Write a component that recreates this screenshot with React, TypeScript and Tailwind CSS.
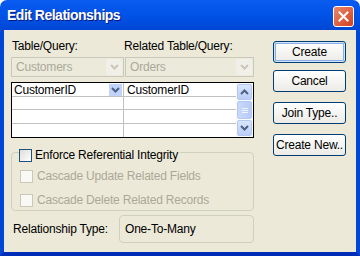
import React from "react";

const font = { fontFamily: "'Liberation Sans', Arial, sans-serif" };

function Chevron({ color = "#4D6185" }: { color?: string }) {
  return (
    <svg width="9" height="6" viewBox="0 0 9 6">
      <path d="M1 1 L4.5 4.5 L8 1" fill="none" stroke={color} strokeWidth="2" />
    </svg>
  );
}

function Combo({ text, className }: { text: string; className: string }) {
  return (
    <div className={`flex h-[20px] items-center border border-[#CAC8BB] bg-[#EBEADB] ${className}`}>
      <span className="flex-1 pl-[4px] text-[#ACA899]">{text}</span>
      <div className="mr-[1px] flex h-[16px] w-[16px] items-center justify-center rounded-[2px] bg-[#F0EFE8]">
        <Chevron color="#C9C7BA" />
      </div>
    </div>
  );
}

function XpButton({ label, primary, className }: { label: string; primary?: boolean; className?: string }) {
  return (
    <div
      className={`flex h-[22px] w-[73px] items-center justify-center rounded-[3px] border border-[#003C74] bg-gradient-to-b from-white to-[#ECEBE6] text-black ${
        primary ? "shadow-[inset_0_0_0_1px_#CEE7FF,inset_0_0_0_2px_#89ADE4]" : ""
      } ${className ?? ""}`}
    >
      {label}
    </div>
  );
}

function Check({ enabled }: { enabled?: boolean }) {
  return (
    <div
      className={`h-[13px] w-[13px] shrink-0 border ${
        enabled ? "border-[#1C5180] bg-gradient-to-br from-[#DCDCD7] to-white" : "border-[#CAC8BB] bg-[#F8F8F4]"
      }`}
    />
  );
}

export default function App() {
  return (
    <div className="h-[256px] w-[360px] overflow-hidden text-[12px] tracking-[-0.2px]" style={font}>
      <div className="relative flex h-[30px] items-center rounded-t-[7px] bg-gradient-to-b from-[#0A5BEF] via-[#0053E6] to-[#0046D5] pl-[7px]">
        <span className="text-[14px] font-bold tracking-[-0.5px] text-white [text-shadow:1px_1px_#0A1883]">Edit Relationships</span>
        <div className="absolute right-[6px] top-[6px] flex h-[21px] w-[21px] items-center justify-center rounded-[3px] border border-white bg-gradient-to-br from-[#E8866A] to-[#D33D18]">
          <svg width="11" height="11" viewBox="0 0 11 11">
            <path d="M1.5 1.5 L9.5 9.5 M9.5 1.5 L1.5 9.5" stroke="white" strokeWidth="2" strokeLinecap="square" />
          </svg>
        </div>
      </div>
      <div className="flex h-[226px] border-x-4 border-b-4 border-x-[#0046D5] border-b-[#002DB8] bg-[#ECE9D8]">
        <div className="ml-[7px] flex w-[243px] flex-col">
          <div className="mt-[8px] flex h-[16px] items-center text-black">
            <span className="w-[113px] pl-[1px]">Table/Query:</span>
            <span>Related Table/Query:</span>
          </div>
          <div className="mt-[3px] flex">
            <Combo text="Customers" className="w-[113px]" />
            <Combo text="Orders" className="ml-[1px] flex-1" />
          </div>
          <div className="mt-[5px] flex h-[56px] border border-black bg-white">
            <div className="flex flex-1 flex-col">
              {[0, 1, 2, 3].map((i) => (
                <div key={i} className={`flex ${i % 2 ? "h-[13px]" : "h-[14px]"} ${i < 3 ? "border-b border-[#C0C0C0]" : ""}`}>
                  <div className="flex w-[112px] items-center border-r border-[#C0C0C0] pl-[2px]">
                    {i === 0 && (
                      <>
                        <span className="flex-1">CustomerID</span>
                        <span className="mr-[1px] flex h-[12px] w-[13px] items-center justify-center bg-[#C1D3FB]">
                          <Chevron color="#4D6185" />
                        </span>
                      </>
                    )}
                  </div>
                  <div className="flex flex-1 items-center pl-[3px]">{i === 0 && "CustomerID"}</div>
                </div>
              ))}
            </div>
            <div className="flex w-[17px] flex-col bg-[#FAFAF7] p-[1px]">
              <div className="flex h-[16px] items-center justify-center rounded-[2px] border border-[#B4C8F6] bg-gradient-to-b from-[#D9E6FF] to-[#B9CDF8]">
                <svg width="9" height="6" viewBox="0 0 9 6">
                  <path d="M1 5 L4.5 1.5 L8 5" fill="none" stroke="#4D6185" strokeWidth="2" />
                </svg>
              </div>
              <div className="my-[1px] flex flex-1 flex-col items-center justify-center gap-[1px] rounded-[2px] border border-[#B4C8F6] bg-gradient-to-r from-[#C9D8FC] to-[#B6CBF8]">
                <div className="h-px w-[6px] bg-[#EEF4FE]" />
                <div className="h-px w-[6px] bg-[#EEF4FE]" />
                <div className="h-px w-[6px] bg-[#EEF4FE]" />
              </div>
              <div className="flex h-[16px] items-center justify-center rounded-[2px] border border-[#B4C8F6] bg-gradient-to-b from-[#D9E6FF] to-[#B9CDF8]">
                <Chevron color="#4D6185" />
              </div>
            </div>
          </div>
          <div className="relative mt-[14px] flex h-[59px] flex-col rounded-[4px] border border-[#D0D0BF]">
            <div className="absolute -top-[7px] left-[7px] flex items-center gap-[3px] bg-[#ECE9D8] pr-[2px] text-black">
              <Check enabled />
              <span>Enforce Referential Integrity</span>
            </div>
            <div className="ml-[8px] mt-[14px] flex items-center gap-[4px] text-[#ACA899]">
              <Check />
              <span>Cascade Update Related Fields</span>
            </div>
            <div className="ml-[8px] mt-[6px] flex items-center gap-[4px] text-[#ACA899]">
              <Check />
              <span>Cascade Delete Related Records</span>
            </div>
          </div>
          <div className="mt-[4px] flex items-center">
            <span className="w-[108px] pl-[2px] text-black">Relationship Type:</span>
            <div className="flex h-[28px] flex-1 items-center rounded-[4px] border border-[#D0D0BF] pl-[5px] text-black">
              One-To-Many
            </div>
          </div>
        </div>
        <div className="ml-[19px] flex flex-col">
          <XpButton label="Create" primary className="mt-[11px]" />
          <XpButton label="Cancel" className="mt-[7px]" />
          <XpButton label="Join Type.." className="mt-[10px]" />
          <XpButton label="Create New.." className="mt-[10px]" />
        </div>
      </div>
    </div>
  );
}
